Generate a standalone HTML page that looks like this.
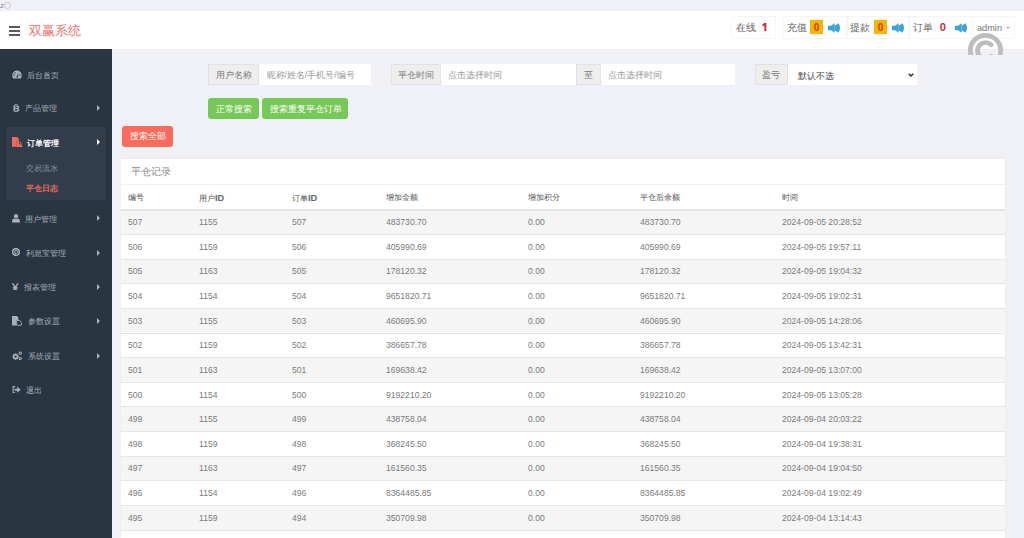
<!DOCTYPE html>
<html><head><meta charset="utf-8">
<style>
*{box-sizing:border-box;margin:0;padding:0}
html,body{width:1024px;height:538px;overflow:hidden}
body{position:relative;background:#f0f1f6;font-family:"Liberation Sans",sans-serif;color:#666}
.abs{position:absolute}
.t{position:absolute;white-space:nowrap;line-height:1}
#topstrip{left:0;top:0;width:1024px;height:11px;background:#f0f1f7}
#header{left:0;top:11px;width:1024px;height:38px;background:#fff}
#side{left:0;top:49px;width:112px;height:489px;background:#2a3542}
.mt{position:absolute;white-space:nowrap;line-height:1;font-size:7.5px;color:#a9b0b9}
.ar{position:absolute;left:96.5px;width:0;height:0;border-top:3.2px solid transparent;border-bottom:3.2px solid transparent;border-left:3px solid #aab1ba;margin-top:-0.6px}
.box{position:absolute;border:1px solid #f6f6f6;top:16px;height:23px}
.ht{position:absolute;white-space:nowrap;line-height:1;font-size:10px;color:#636363}
.badge{position:absolute;top:20px;width:13px;height:14px;background:#f4b400;color:#d23c1c;font-size:10px;font-weight:bold;text-align:center;line-height:15.5px}
.spk{position:absolute;top:23px;width:12.5px;height:10px}
.ig{position:absolute;top:64.2px;height:21px}
.addon{position:absolute;top:0;height:21px;background:#eeeeee;border:1px solid #e2e2e2}
.inp{position:absolute;top:0;height:21px;background:#fff}
.btn{position:absolute;border-radius:3px}
.bt{position:absolute;white-space:nowrap;line-height:1;font-size:8.6px;color:#fff}
#card{left:121px;top:158.5px;width:884px;height:380px;background:#fff;box-shadow:0 -1px 4px rgba(0,0,0,0.025)}
.tt{position:absolute;white-space:nowrap;line-height:1;font-size:8.6px;color:#7b7b7b}
.th{position:absolute;white-space:nowrap;line-height:1;font-size:8px;color:#505050;font-weight:500;top:194px}
.th b{font-weight:bold;font-size:9.2px;color:#666}
.row{position:absolute;left:121px;width:884px;height:24.65px;border-top:1px solid #e6e6e6}
.odd{background:#f5f5f5}
</style></head><body>
<div id="topstrip" class="abs">
  <div class="t" style="left:0;top:2px;font-size:8px;color:#888">z</div>
  <div class="abs" style="left:4px;top:2px;width:7px;height:7px;border:1px solid #c8c8c8;border-radius:50%"></div>
</div>
<div id="header" class="abs">
  <div class="abs" style="left:9.3px;top:15px;width:10.7px;height:1.7px;background:#5a5a5a"></div>
  <div class="abs" style="left:9.3px;top:19px;width:10.7px;height:1.7px;background:#5a5a5a"></div>
  <div class="abs" style="left:9.3px;top:23px;width:10.7px;height:1.7px;background:#5a5a5a"></div>
  <div class="t" id="logo" style="left:29px;top:13.9px;font-size:12.9px;color:#e8776f">双赢系统</div>
</div>
<!-- header right -->
<div class="box" style="left:731px;width:45px"></div>
<div class="ht" style="left:735.5px;top:22.5px">在线</div>
<svg class="abs" style="left:762.4px;top:23.2px" width="5" height="8" viewBox="0 0 5 8"><path d="M2.4 0H4.3V8H2.4V2.3L0.4 3.4V1.5z" fill="#c42b35"/></svg>
<div class="box" style="left:783px;width:64px"></div>
<div class="ht" style="left:786.5px;top:22.5px">充值</div>
<div class="badge" style="left:810px">0</div>
<svg class="spk" style="left:828px" viewBox="0 0 12 10" preserveAspectRatio="none"><path d="M0 2.8h2.8l3.6-2.6v9.6l-3.6-2.6H0z" fill="#3aa5d8"/><path d="M7 2.4q1.7 2.6 0 5.2M9 1q2.5 4 0 8" stroke="#3aa5d8" stroke-width="2.5" fill="none"/></svg>
<div class="box" style="left:847px;width:62px"></div>
<div class="ht" style="left:850px;top:22.5px">提款</div>
<div class="badge" style="left:874px">0</div>
<svg class="spk" style="left:891.5px" viewBox="0 0 12 10" preserveAspectRatio="none"><path d="M0 2.8h2.8l3.6-2.6v9.6l-3.6-2.6H0z" fill="#3aa5d8"/><path d="M7 2.4q1.7 2.6 0 5.2M9 1q2.5 4 0 8" stroke="#3aa5d8" stroke-width="2.5" fill="none"/></svg>
<div class="box" style="left:909px;width:63px"></div>
<div class="ht" style="left:913px;top:22.5px">订单</div>
<div class="t" style="left:939.8px;top:22.3px;font-size:11px;font-weight:bold;color:#c32a33">0</div>
<svg class="spk" style="left:954.5px" viewBox="0 0 12 10" preserveAspectRatio="none"><path d="M0 2.8h2.8l3.6-2.6v9.6l-3.6-2.6H0z" fill="#3aa5d8"/><path d="M7 2.4q1.7 2.6 0 5.2M9 1q2.5 4 0 8" stroke="#3aa5d8" stroke-width="2.5" fill="none"/></svg>
<div class="box" style="left:973px;width:42px"></div>
<div class="t" style="left:977px;top:23.5px;font-size:9.2px;color:#777">admin</div>
<div class="abs" style="left:1006px;top:27px;width:0;height:0;border-left:2.5px solid transparent;border-right:2.5px solid transparent;border-top:2.5px solid #aaa"></div>
<!-- copyright ring -->
<div class="abs" style="left:966px;top:32px;width:40px;height:22.8px;overflow:hidden">
  <svg width="40" height="40" viewBox="0 0 40 40" style="position:absolute;left:0;top:0"><circle cx="19.5" cy="18.5" r="15.2" stroke="#bdbdbd" stroke-width="4.7" fill="none"/><path d="M25.2 12.8A8 8 0 1 0 25.2 24.2" stroke="#bdbdbd" stroke-width="4.7" fill="none" stroke-linecap="round"/></svg>
</div>

<div id="side" class="abs"></div>
<div class="abs" style="left:6px;top:127px;width:99.5px;height:73px;background:#323d4b;border-radius:2px"></div>
<!-- sidebar icons -->
<svg class="abs" style="left:12px;top:69.5px" width="10" height="9" viewBox="0 0 10 9"><path d="M5 0.6A4.8 4.8 0 0 0 0.2 5.4c0 1.1 0.4 2.2 1 3h7.6c0.6-0.8 1-1.9 1-3A4.8 4.8 0 0 0 5 0.6z" fill="#a9b0b9"/><circle cx="2" cy="5.2" r="0.7" fill="#2a3542"/><circle cx="3" cy="2.9" r="0.7" fill="#2a3542"/><circle cx="8" cy="5.2" r="0.7" fill="#2a3542"/><path d="M4.2 7.6L6.6 2.4L5.8 7.6z" fill="#2a3542"/></svg>
<svg class="abs" style="left:12.5px;top:103.8px" width="7" height="8.4" viewBox="0 0 7 8.4"><path d="M0.5 1.4h3.6c1.3 0 2 0.7 2 1.6c0 0.6-0.4 1-0.9 1.2c0.7 0.2 1.2 0.7 1.2 1.5c0 1.1-0.8 1.8-2.2 1.8H0.5z M2 2.6v1.2h1.7c0.5 0 0.8-0.2 0.8-0.6s-0.3-0.6-0.8-0.6z M2 5v1.4h1.9c0.6 0 0.9-0.3 0.9-0.7s-0.3-0.7-0.9-0.7z" fill="#a9b0b9" fill-rule="evenodd"/><path d="M2.3 0v1.6M4 0v1.6M2.3 6.8v1.6M4 6.8v1.6" stroke="#a9b0b9" stroke-width="0.9"/></svg>
<svg class="abs" style="left:11.8px;top:136.6px" width="10.5" height="10.6" viewBox="0 0 10.5 10.6"><path d="M0 0h5.2l1.6 1.6v2.6H4.4v5.6H0z" fill="#ef6a5e"/><path d="M4.4 4.2h3.4l2.7 2.7v3.7H4.4z" fill="#ef6a5e"/><path d="M7.6 4.6v2.5h2.4" stroke="#2f3a47" stroke-width="0.8" fill="none"/></svg>
<svg class="abs" style="left:12px;top:214.3px" width="8" height="8.4" viewBox="0 0 8 8.4"><ellipse cx="4" cy="2.3" rx="2.1" ry="2.3" fill="#a9b0b9"/><path d="M0 8.4c0-2.6 0.7-3.6 2.2-3.9c0.5 0.4 1.1 0.6 1.8 0.6s1.3-0.2 1.8-0.6c1.5 0.3 2.2 1.3 2.2 3.9z" fill="#a9b0b9"/></svg>
<svg class="abs" style="left:12.3px;top:248.4px" width="8" height="8.2" viewBox="0 0 8 8.2"><circle cx="4" cy="4" r="3.3" stroke="#a9b0b9" stroke-width="1.5" fill="none"/><circle cx="4.1" cy="3.8" r="1.5" stroke="#a9b0b9" stroke-width="1" fill="none"/><path d="M3.6 4.6L2.6 8.2" stroke="#a9b0b9" stroke-width="1"/></svg>
<svg class="abs" style="left:12px;top:282.5px" width="6.5" height="7.6" viewBox="0 0 6.5 7.6"><path d="M0.3 0.2L3.25 4.2L6.2 0.2M3.25 4.2V7.6M1 4.4h4.5M1 6h4.5" stroke="#a9b0b9" stroke-width="1.3" fill="none"/></svg>
<svg class="abs" style="left:12px;top:316px" width="10" height="9.6" viewBox="0 0 10 9.6"><path d="M0 0h4.8l1.6 1.6v2.5H4.2v5.5H0z" fill="#a9b0b9"/><path d="M4.6 4.5h3l2 2v2.7h-5z" stroke="#a9b0b9" stroke-width="0.9" fill="none"/></svg>
<svg class="abs" style="left:12.4px;top:350.6px" width="10.5" height="9.6" viewBox="0 0 10.5 9.6"><path d="M7.10 5.60 L7.03 6.28 L6.00 6.59 L5.76 7.04 L6.07 8.07 L5.54 8.51 L4.59 8.00 L4.11 8.15 L3.60 9.10 L2.92 9.03 L2.61 8.00 L2.16 7.76 L1.13 8.07 L0.69 7.54 L1.20 6.59 L1.05 6.11 L0.10 5.60 L0.17 4.92 L1.20 4.61 L1.44 4.16 L1.13 3.13 L1.66 2.69 L2.61 3.20 L3.09 3.05 L3.60 2.10 L4.28 2.17 L4.59 3.20 L5.04 3.44 L6.07 3.13 L6.51 3.66 L6.00 4.61 L6.15 5.09Z M2.50 5.60 a1.10 1.10 0 1 0 2.20 0 a1.10 1.10 0 1 0 -2.20 0Z" fill="#a9b0b9" fill-rule="evenodd"/><path d="M10.20 2.20 L10.14 2.69 L9.47 2.88 L9.25 3.15 L9.25 3.85 L8.79 4.04 L8.30 3.55 L7.95 3.50 L7.35 3.85 L6.96 3.54 L7.13 2.88 L7.00 2.55 L6.40 2.20 L6.46 1.71 L7.13 1.53 L7.35 1.25 L7.35 0.55 L7.81 0.36 L8.30 0.85 L8.65 0.90 L9.25 0.55 L9.64 0.86 L9.47 1.52 L9.60 1.85Z M7.70 2.20 a0.60 0.60 0 1 0 1.20 0 a0.60 0.60 0 1 0 -1.20 0Z" fill="#a9b0b9" fill-rule="evenodd"/><path d="M10.20 7.60 L10.14 8.09 L9.47 8.28 L9.25 8.55 L9.25 9.25 L8.79 9.44 L8.30 8.95 L7.95 8.90 L7.35 9.25 L6.96 8.94 L7.13 8.28 L7.00 7.95 L6.40 7.60 L6.46 7.11 L7.13 6.92 L7.35 6.65 L7.35 5.95 L7.81 5.76 L8.30 6.25 L8.65 6.30 L9.25 5.95 L9.64 6.26 L9.47 6.92 L9.60 7.25Z M7.70 7.60 a0.60 0.60 0 1 0 1.20 0 a0.60 0.60 0 1 0 -1.20 0Z" fill="#a9b0b9" fill-rule="evenodd"/></svg>
<svg class="abs" style="left:12px;top:385.6px" width="9" height="7.4" viewBox="0 0 9 7.4"><path d="M3.2 0.6H1.1v6.2h2.1" stroke="#a9b0b9" stroke-width="1.1" fill="none"/><path d="M2.6 2.7h2.6V0.6L8.7 3.7L5.2 6.8V4.7H2.6z" fill="#a9b0b9"/></svg>

<div class="mt" style="left:27px;top:71.6px">后台首页</div>
<div class="mt" style="left:25px;top:105.2px">产品管理</div><span class="ar" style="top:105.5px"></span>
<div class="mt" style="left:27px;top:140px;color:#fff;font-weight:bold">订单管理</div><span class="ar" style="top:140px;border-left-color:#fff"></span>
<div class="mt" style="left:26px;top:164.9px;color:#8b929b">交易流水</div>
<div class="mt" style="left:26px;top:185px;color:#ef6a5e;font-weight:bold">平仓日志</div>
<div class="mt" style="left:25px;top:215.5px">用户管理</div><span class="ar" style="top:216px"></span>
<div class="mt" style="left:26.4px;top:250px">利息宝管理</div><span class="ar" style="top:250.2px"></span>
<div class="mt" style="left:24px;top:283.9px">报表管理</div><span class="ar" style="top:284.8px"></span>
<div class="mt" style="left:27.6px;top:317.7px">参数设置</div><span class="ar" style="top:318.6px"></span>
<div class="mt" style="left:28.4px;top:353px">系统设置</div><span class="ar" style="top:353.2px"></span>
<div class="mt" style="left:26.4px;top:387px">退出</div>

<!-- form -->
<div class="ig" style="left:208px">
  <div class="addon" style="left:0;width:51px"></div>
  <div class="inp" style="left:51px;width:112px"></div>
</div>
<div class="t" style="left:216px;top:71.3px;font-size:8.5px;color:#7a7a7a">用户名称</div>
<div class="t" style="left:266.5px;top:71.3px;font-size:8.5px;color:#999">昵称/姓名/手机号/编号</div>
<div class="ig" style="left:390.5px">
  <div class="addon" style="left:0;width:50px"></div>
  <div class="inp" style="left:50px;width:135px"></div>
  <div class="addon" style="left:185px;width:25px"></div>
  <div class="inp" style="left:210px;width:134.5px"></div>
</div>
<div class="t" style="left:398px;top:71.3px;font-size:8.5px;color:#7a7a7a">平仓时间</div>
<div class="t" style="left:448px;top:71.3px;font-size:8.5px;color:#999">点击选择时间</div>
<div class="t" style="left:584px;top:71.3px;font-size:8.5px;color:#7a7a7a">至</div>
<div class="t" style="left:608px;top:71.3px;font-size:8.5px;color:#999">点击选择时间</div>
<div class="ig" style="left:754.5px">
  <div class="addon" style="left:0;width:33px"></div>
  <div class="inp" style="left:33px;width:129px"></div>
</div>
<div class="t" style="left:762px;top:71.3px;font-size:8.5px;color:#7a7a7a">盈亏</div>
<div class="t" style="left:798px;top:71.5px;font-size:8.5px;color:#444">默认不选</div>
<svg class="abs" style="left:908.3px;top:73.3px" width="6" height="4.2" viewBox="0 0 6 4.2"><path d="M0.7 0.7L3 3L5.3 0.7" stroke="#333" stroke-width="1.5" fill="none"/></svg>

<div class="btn" style="left:208px;top:98.2px;width:50.8px;height:21px;background:#77c957"></div>
<div class="bt" style="left:215.5px;top:105.2px">正常搜索</div>
<div class="btn" style="left:262px;top:98.2px;width:85.5px;height:21px;background:#77c957"></div>
<div class="bt" style="left:269.5px;top:105.2px">搜索重复平仓订单</div>
<div class="btn" style="left:121.5px;top:126px;width:51px;height:20.5px;background:#fa6b5c"></div>
<div class="bt" style="left:130px;top:131.8px">搜索全部</div>

<div id="card" class="abs"></div>
<div class="abs" style="left:121px;top:184.2px;width:884px;height:1px;background:#f1f1f1"></div>
<div class="t" style="left:131px;top:166.8px;font-size:9.5px;color:#888">平仓记录</div>
<div class="abs" style="left:121px;top:209.3px;width:884px;height:2px;background:#e4e4e4"></div>
<div class="th" style="left:128px">编号</div>
<div class="th" style="left:199px">用户<b>ID</b></div>
<div class="th" style="left:292px">订单<b>ID</b></div>
<div class="th" style="left:386px">增加金额</div>
<div class="th" style="left:528px">增加积分</div>
<div class="th" style="left:640px">平仓后余额</div>
<div class="th" style="left:782px">时间</div>
<div id="rows">
<div class="row odd" style="top:211.3px;height:22.6px;border-top:0"></div>
<div class="tt" style="left:128px;top:217.95px">507</div><div class="tt" style="left:199px;top:217.95px">1155</div><div class="tt" style="left:292px;top:217.95px">507</div><div class="tt" style="left:386px;top:217.95px">483730.70</div><div class="tt" style="left:528px;top:217.95px">0.00</div><div class="tt" style="left:640px;top:217.95px">483730.70</div><div class="tt" style="left:782px;top:217.95px">2024-09-05 20:28:52</div>
<div class="row" style="top:233.90px"></div>
<div class="tt" style="left:128px;top:242.60px">506</div><div class="tt" style="left:199px;top:242.60px">1159</div><div class="tt" style="left:292px;top:242.60px">506</div><div class="tt" style="left:386px;top:242.60px">405990.69</div><div class="tt" style="left:528px;top:242.60px">0.00</div><div class="tt" style="left:640px;top:242.60px">405990.69</div><div class="tt" style="left:782px;top:242.60px">2024-09-05 19:57:11</div>
<div class="row odd" style="top:258.55px"></div>
<div class="tt" style="left:128px;top:267.25px">505</div><div class="tt" style="left:199px;top:267.25px">1163</div><div class="tt" style="left:292px;top:267.25px">505</div><div class="tt" style="left:386px;top:267.25px">178120.32</div><div class="tt" style="left:528px;top:267.25px">0.00</div><div class="tt" style="left:640px;top:267.25px">178120.32</div><div class="tt" style="left:782px;top:267.25px">2024-09-05 19:04:32</div>
<div class="row" style="top:283.20px"></div>
<div class="tt" style="left:128px;top:291.90px">504</div><div class="tt" style="left:199px;top:291.90px">1154</div><div class="tt" style="left:292px;top:291.90px">504</div><div class="tt" style="left:386px;top:291.90px">9651820.71</div><div class="tt" style="left:528px;top:291.90px">0.00</div><div class="tt" style="left:640px;top:291.90px">9651820.71</div><div class="tt" style="left:782px;top:291.90px">2024-09-05 19:02:31</div>
<div class="row odd" style="top:307.85px"></div>
<div class="tt" style="left:128px;top:316.55px">503</div><div class="tt" style="left:199px;top:316.55px">1155</div><div class="tt" style="left:292px;top:316.55px">503</div><div class="tt" style="left:386px;top:316.55px">460695.90</div><div class="tt" style="left:528px;top:316.55px">0.00</div><div class="tt" style="left:640px;top:316.55px">460695.90</div><div class="tt" style="left:782px;top:316.55px">2024-09-05 14:28:06</div>
<div class="row" style="top:332.50px"></div>
<div class="tt" style="left:128px;top:341.20px">502</div><div class="tt" style="left:199px;top:341.20px">1159</div><div class="tt" style="left:292px;top:341.20px">502</div><div class="tt" style="left:386px;top:341.20px">386657.78</div><div class="tt" style="left:528px;top:341.20px">0.00</div><div class="tt" style="left:640px;top:341.20px">386657.78</div><div class="tt" style="left:782px;top:341.20px">2024-09-05 13:42:31</div>
<div class="row odd" style="top:357.15px"></div>
<div class="tt" style="left:128px;top:365.85px">501</div><div class="tt" style="left:199px;top:365.85px">1163</div><div class="tt" style="left:292px;top:365.85px">501</div><div class="tt" style="left:386px;top:365.85px">169638.42</div><div class="tt" style="left:528px;top:365.85px">0.00</div><div class="tt" style="left:640px;top:365.85px">169638.42</div><div class="tt" style="left:782px;top:365.85px">2024-09-05 13:07:00</div>
<div class="row" style="top:381.80px"></div>
<div class="tt" style="left:128px;top:390.50px">500</div><div class="tt" style="left:199px;top:390.50px">1154</div><div class="tt" style="left:292px;top:390.50px">500</div><div class="tt" style="left:386px;top:390.50px">9192210.20</div><div class="tt" style="left:528px;top:390.50px">0.00</div><div class="tt" style="left:640px;top:390.50px">9192210.20</div><div class="tt" style="left:782px;top:390.50px">2024-09-05 13:05:28</div>
<div class="row odd" style="top:406.45px"></div>
<div class="tt" style="left:128px;top:415.15px">499</div><div class="tt" style="left:199px;top:415.15px">1155</div><div class="tt" style="left:292px;top:415.15px">499</div><div class="tt" style="left:386px;top:415.15px">438758.04</div><div class="tt" style="left:528px;top:415.15px">0.00</div><div class="tt" style="left:640px;top:415.15px">438758.04</div><div class="tt" style="left:782px;top:415.15px">2024-09-04 20:03:22</div>
<div class="row" style="top:431.10px"></div>
<div class="tt" style="left:128px;top:439.80px">498</div><div class="tt" style="left:199px;top:439.80px">1159</div><div class="tt" style="left:292px;top:439.80px">498</div><div class="tt" style="left:386px;top:439.80px">368245.50</div><div class="tt" style="left:528px;top:439.80px">0.00</div><div class="tt" style="left:640px;top:439.80px">368245.50</div><div class="tt" style="left:782px;top:439.80px">2024-09-04 19:38:31</div>
<div class="row odd" style="top:455.75px"></div>
<div class="tt" style="left:128px;top:464.45px">497</div><div class="tt" style="left:199px;top:464.45px">1163</div><div class="tt" style="left:292px;top:464.45px">497</div><div class="tt" style="left:386px;top:464.45px">161560.35</div><div class="tt" style="left:528px;top:464.45px">0.00</div><div class="tt" style="left:640px;top:464.45px">161560.35</div><div class="tt" style="left:782px;top:464.45px">2024-09-04 19:04:50</div>
<div class="row" style="top:480.40px"></div>
<div class="tt" style="left:128px;top:489.10px">496</div><div class="tt" style="left:199px;top:489.10px">1154</div><div class="tt" style="left:292px;top:489.10px">496</div><div class="tt" style="left:386px;top:489.10px">8364485.85</div><div class="tt" style="left:528px;top:489.10px">0.00</div><div class="tt" style="left:640px;top:489.10px">8364485.85</div><div class="tt" style="left:782px;top:489.10px">2024-09-04 19:02:49</div>
<div class="row odd" style="top:505.05px"></div>
<div class="tt" style="left:128px;top:513.75px">495</div><div class="tt" style="left:199px;top:513.75px">1159</div><div class="tt" style="left:292px;top:513.75px">494</div><div class="tt" style="left:386px;top:513.75px">350709.98</div><div class="tt" style="left:528px;top:513.75px">0.00</div><div class="tt" style="left:640px;top:513.75px">350709.98</div><div class="tt" style="left:782px;top:513.75px">2024-09-04 13:14:43</div>
<div class="row" style="top:529.70px"></div>
</div>
</body></html>
